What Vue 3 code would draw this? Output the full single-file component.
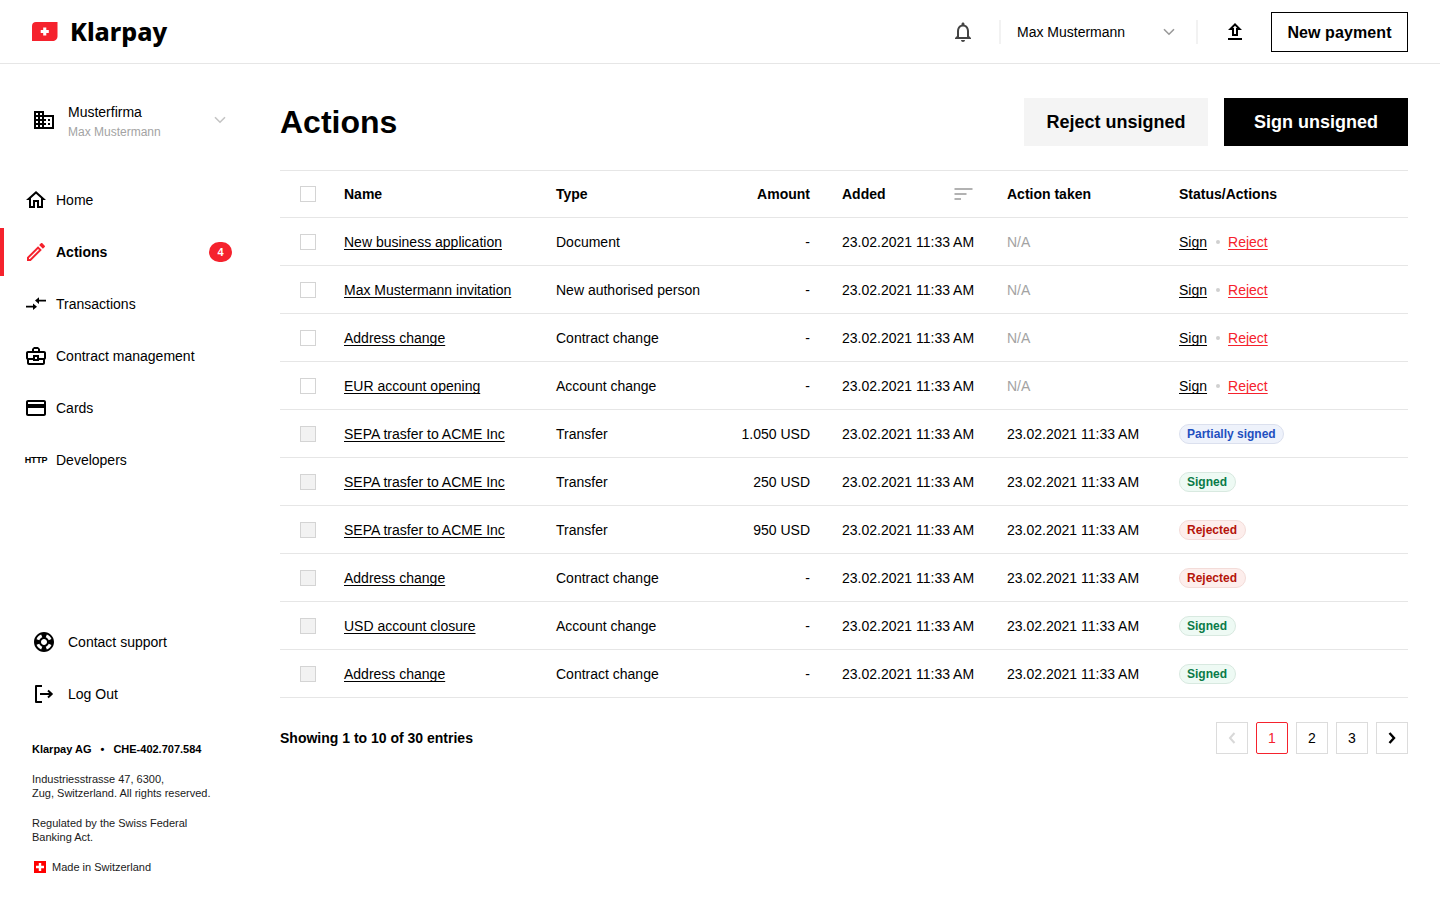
<template>
  <div class="page">
    <!-- Header -->
    <header class="topbar">
      <div class="brand">
        <svg class="brand-mark" width="26" height="20" viewBox="0 0 26 20">
          <path d="M4 0H25.5V14C25.5 17.3 23.3 19 20.5 19H0V4C0 1.6 1.6 0 4 0Z" fill="#f5222d" />
          <path d="M11.2 5.5H14.3V8H16.8V11H14.3V13.5H11.2V11H8.7V8H11.2Z" fill="#fff" />
        </svg>
        <span class="brand-name">Klarpay</span>
      </div>
      <div class="top-actions">
        <svg class="bell" width="24" height="24" viewBox="0 0 24 24">
          <path d="M12 22c1.1 0 2-.9 2-2h-4c0 1.1.9 2 2 2zm6-6v-5c0-3.07-1.63-5.64-4.5-6.32V4c0-.83-.67-1.5-1.5-1.5s-1.5.67-1.5 1.5v.68C7.64 5.36 6 7.92 6 11v5l-2 2v1h16v-1l-2-2zm-2 1H8v-6c0-2.48 1.51-4.5 4-4.5s4 2.02 4 4.5v6z" fill="#444" />
        </svg>
        <div class="user-menu">
          <span>Max Mustermann</span>
          <svg width="12" height="8" viewBox="0 0 12 8"><path d="M1 1.2L6 6.2L11 1.2" fill="none" stroke="#999" stroke-width="1.6" /></svg>
        </div>
        <svg class="upload" width="24" height="24" viewBox="0 0 24 24">
          <path d="M9 16h6v-6h4l-7-7-7 7h4zm3-10.17L14.17 8H13v6h-2V8H9.83L12 5.83zM5 18h14v2H5z" fill="#000" />
        </svg>
        <button class="btn-outline">New payment</button>
      </div>
    </header>

    <div class="layout">
      <!-- Sidebar -->
      <aside class="sidebar">
        <div>
          <div class="company">
            <svg width="24" height="24" viewBox="0 0 24 24">
              <path d="M12 7V3H2v18h20V7H12zM6 19H4v-2h2v2zm0-4H4v-2h2v2zm0-4H4V9h2v2zm0-4H4V5h2v2zm4 12H8v-2h2v2zm0-4H8v-2h2v2zm0-4H8V9h2v2zm0-4H8V5h2v2zm10 12h-8v-2h2v-2h-2v-2h2v-2h-2V9h8v10zm-2-8h-2v2h2v-2zm0 4h-2v2h2v-2z" fill="#000" />
            </svg>
            <div class="company-text">
              <div class="company-name">Musterfirma</div>
              <div class="company-user">Max Mustermann</div>
            </div>
            <svg class="company-caret" width="12" height="8" viewBox="0 0 12 8"><path d="M1 1.2L6 6.2L11 1.2" fill="none" stroke="#c4c4c4" stroke-width="1.6" /></svg>
          </div>

          <nav class="nav">
            <a class="nav-item">
              <svg width="24" height="24" viewBox="0 0 24 24"><path d="M12 5.69l5 4.5V18h-2v-6H9v6H7v-7.81l5-4.5M12 3L2 12h3v8h6v-6h2v6h6v-8h3L12 3z" fill="#000" /></svg>
              <span>Home</span>
            </a>
            <a class="nav-item active">
              <svg width="24" height="24" viewBox="0 0 24 24"><path d="M14.06 9.02l.92.92L5.92 19H5v-.92l9.06-9.06M17.66 3c-.25 0-.51.1-.7.29l-1.83 1.83 3.75 3.75 1.83-1.83c.39-.39.39-1.02 0-1.41l-2.34-2.34c-.2-.2-.45-.29-.71-.29zm-3.6 3.19L3 17.25V21h3.75L17.81 9.94l-3.75-3.75z" fill="#f5222d" /></svg>
              <span>Actions</span>
              <b class="nav-badge">4</b>
            </a>
            <a class="nav-item">
              <svg width="24" height="24" viewBox="0 0 24 24">
                <path d="M2 13.8H9V11.4L13 14.7L9 18V15.6H2Z" fill="#000" />
                <path d="M22 7.7H15V5.3L11 8.6L15 11.9V9.5H22Z" fill="#000" />
              </svg>
              <span>Transactions</span>
            </a>
            <a class="nav-item">
              <svg width="24" height="24" viewBox="0 0 24 24"><path d="M20 7h-4V5l-2-2h-4L8 5v2H4c-1.1 0-2 .9-2 2v5c0 .75.4 1.38 1 1.73V19c0 1.11.89 2 2 2h14c1.11 0 2-.89 2-2v-3.28c.59-.35 1-.99 1-1.72V9c0-1.1-.9-2-2-2zM10 5h4v2h-4V5zM4 9h16v5h-5v-3H9v3H4V9zm9 6h-2v-2h2v2zm6 4H5v-3h4v1h6v-1h4v3z" fill="#000" /></svg>
              <span>Contract management</span>
            </a>
            <a class="nav-item">
              <svg width="24" height="24" viewBox="0 0 24 24"><path d="M20 4H4c-1.11 0-1.99.89-1.99 2L2 18c0 1.11.89 2 2 2h16c1.11 0 2-.89 2-2V6c0-1.11-.89-2-2-2zm0 14H4v-6h16v6zm0-10H4V6h16v2z" fill="#000" /></svg>
              <span>Cards</span>
            </a>
            <a class="nav-item">
              <i class="http-icon">HTTP</i>
              <span>Developers</span>
            </a>
          </nav>
        </div>

        <div class="side-bottom">
          <a class="bottom-link">
            <svg width="24" height="24" viewBox="0 0 24 24"><path d="M12 2C6.48 2 2 6.48 2 12s4.48 10 10 10 10-4.48 10-10S17.52 2 12 2zm7.46 7.12l-2.78 1.15c-.51-1.36-1.58-2.44-2.95-2.94l1.15-2.78c2.1.8 3.77 2.47 4.58 4.57zM12 15c-1.66 0-3-1.34-3-3s1.34-3 3-3 3 1.34 3 3-1.34 3-3 3zM9.13 4.54l1.17 2.78c-1.38.5-2.47 1.59-2.98 2.97L4.54 9.13c.81-2.11 2.48-3.78 4.59-4.59zM4.54 14.87l2.78-1.15c.51 1.38 1.59 2.46 2.97 2.96l-1.17 2.78c-2.1-.81-3.77-2.48-4.58-4.59zm10.34 4.59l-1.15-2.78c1.37-.51 2.45-1.59 2.95-2.97l2.78 1.17c-.81 2.1-2.48 3.77-4.58 4.58z" fill="#000" /></svg>
            <span>Contact support</span>
          </a>
          <a class="bottom-link">
            <svg width="24" height="24" viewBox="0 0 24 24">
              <path d="M10 4H4V20H10" fill="none" stroke="#000" stroke-width="2" stroke-linejoin="round" />
              <path d="M8 12H19.5M16 8.5L19.7 12L16 15.5" fill="none" stroke="#000" stroke-width="2" />
            </svg>
            <span>Log Out</span>
          </a>
          <div class="legal">
            <p class="legal-head"><b>Klarpay AG</b><b class="legal-dot">•</b><b>CHE-402.707.584</b></p>
            <p>Industriesstrasse 47, 6300,<br />Zug, Switzerland. All rights reserved.</p>
            <p>Regulated by the Swiss Federal<br />Banking Act.</p>
            <p class="made-in">
              <svg width="12" height="12" viewBox="0 0 12 12">
                <rect width="12" height="12" fill="#f00" />
                <path d="M4.8 2H7.2V4.8H10V7.2H7.2V10H4.8V7.2H2V4.8H4.8Z" fill="#fff" />
              </svg>
              Made in Switzerland
            </p>
          </div>
        </div>
      </aside>

      <!-- Main -->
      <main class="main">
        <div class="title-row">
          <h1>Actions</h1>
          <div class="title-buttons">
            <button class="btn-big btn-light">Reject unsigned</button>
            <button class="btn-big btn-dark">Sign unsigned</button>
          </div>
        </div>

        <div class="table">
          <div class="row head">
            <div><span class="check"></span></div>
            <div>Name</div>
            <div>Type</div>
            <div class="right">Amount</div>
            <div class="added-head">
              <span>Added</span>
              <svg width="19" height="14" viewBox="0 0 19 14">
                <path d="M0.5 2H18.5M0.5 7H12.5M0.5 12H7" stroke="#999" stroke-width="1.6" fill="none" />
              </svg>
            </div>
            <div>Action taken</div>
            <div>Status/Actions</div>
          </div>

          <div v-for="(item, i) in rows" :key="i" class="row">
            <div><span class="check" :class="{ disabled: item.status }"></span></div>
            <div><a class="link">{{ item.name }}</a></div>
            <div>{{ item.type }}</div>
            <div class="right">{{ item.amount }}</div>
            <div>23.02.2021 11:33 AM</div>
            <div v-if="item.status">23.02.2021 11:33 AM</div>
            <div v-else class="muted">N/A</div>
            <div v-if="item.status">
              <span class="pill" :class="item.status">{{ statusLabels[item.status] }}</span>
            </div>
            <div v-else class="row-actions">
              <a class="link">Sign</a>
              <i class="sep"></i>
              <a class="link reject">Reject</a>
            </div>
          </div>
        </div>

        <div class="table-footer">
          <b>Showing 1 to 10 of 30 entries</b>
          <div class="pager">
            <button class="page-btn">
              <svg width="10" height="14" viewBox="0 0 10 14"><path d="M7.5 2L3 7L7.5 12" fill="none" stroke="#d8d8d8" stroke-width="2" /></svg>
            </button>
            <button class="page-btn current">1</button>
            <button class="page-btn">2</button>
            <button class="page-btn">3</button>
            <button class="page-btn">
              <svg width="10" height="14" viewBox="0 0 10 14"><path d="M2.5 2L7 7L2.5 12" fill="none" stroke="#000" stroke-width="2.4" /></svg>
            </button>
          </div>
        </div>
      </main>
    </div>
  </div>
</template>

<script setup>
const statusLabels = {
  partial: 'Partially signed',
  signed: 'Signed',
  rejected: 'Rejected'
}

const rows = [
  { name: 'New business application', type: 'Document', amount: '-' },
  { name: 'Max Mustermann invitation', type: 'New authorised person', amount: '-' },
  { name: 'Address change', type: 'Contract change', amount: '-' },
  { name: 'EUR account opening', type: 'Account change', amount: '-' },
  { name: 'SEPA trasfer to ACME Inc', type: 'Transfer', amount: '1.050 USD', status: 'partial' },
  { name: 'SEPA trasfer to ACME Inc', type: 'Transfer', amount: '250 USD', status: 'signed' },
  { name: 'SEPA trasfer to ACME Inc', type: 'Transfer', amount: '950 USD', status: 'rejected' },
  { name: 'Address change', type: 'Contract change', amount: '-', status: 'rejected' },
  { name: 'USD account closure', type: 'Account change', amount: '-', status: 'signed' },
  { name: 'Address change', type: 'Contract change', amount: '-', status: 'signed' }
]
</script>

<style>
html,
body {
  margin: 0;
  background: #fff;
}
</style>

<style scoped>
.page {
  min-height: 900px;
  display: flex;
  flex-direction: column;
  font-family: "Liberation Sans", Arial, sans-serif;
  font-size: 14px;
  color: #000;
}

.topbar {
  height: 64px;
  box-sizing: border-box;
  border-bottom: 1px solid #e6e6e6;
  display: flex;
  align-items: center;
  justify-content: space-between;
  padding: 0 32px;
}

.brand {
  display: flex;
  align-items: center;
  gap: 12px;
}

.brand-mark {
  margin-top: 1px;
}

.brand-name {
  font-family: "Noto Sans", sans-serif;
  font-size: 25px;
  font-weight: 800;
  line-height: 32px;
  margin-bottom: 2px;
}

.top-actions {
  display: flex;
  align-items: center;
}

.bell {
  margin-right: 24px;
}

.user-menu {
  width: 199px;
  box-sizing: border-box;
  height: 24px;
  border-left: 2px solid #f2f2f2;
  border-right: 2px solid #f2f2f2;
  padding: 0 21px 0 16px;
  display: flex;
  align-items: center;
  justify-content: space-between;
}

.upload {
  margin: 0 24px 0 25px;
}

.btn-outline {
  width: 137px;
  height: 40px;
  border: 1px solid #000;
  background: #fff;
  font: 700 16px "Liberation Sans", Arial, sans-serif;
  letter-spacing: 0.1px;
  padding: 2px 0 0;
}

.layout {
  flex: 1;
  display: flex;
}

.sidebar {
  width: 280px;
  flex-shrink: 0;
  box-sizing: border-box;
  display: flex;
  flex-direction: column;
  justify-content: space-between;
}

.company {
  display: flex;
  align-items: center;
  padding: 34px 0 0 32px;
  width: 226px;
  height: 78px;
  box-sizing: border-box;
}

.company-text {
  margin-left: 12px;
  flex: 1;
}

.company-name {
  line-height: 24px;
}

.company-user {
  font-size: 12px;
  line-height: 16px;
  color: #a3a3a3;
}

.nav {
  margin-top: 34px;
}

.nav-item {
  position: relative;
  height: 48px;
  margin-bottom: 4px;
  width: 256px;
  box-sizing: border-box;
  display: flex;
  align-items: center;
  gap: 8px;
  padding: 0 24px;
}

.nav-item.active {
  font-weight: 700;
  border-left: 4px solid #f5222d;
  padding-left: 20px;
}

.nav-badge {
  margin-left: auto;
  width: 23px;
  height: 20px;
  border-radius: 10px;
  background: #f5222d;
  color: #fff;
  font-size: 11px;
  line-height: 20px;
  text-align: center;
}

.http-icon {
  width: 24px;
  font: 700 9px/1 "Liberation Sans", Arial, sans-serif;
  letter-spacing: -0.3px;
  text-align: center;
  white-space: nowrap;
}

.side-bottom {
  padding: 0 0 26px 32px;
}

.bottom-link {
  display: flex;
  align-items: center;
  gap: 12px;
  height: 48px;
  margin-bottom: 4px;
}

.legal {
  margin-top: 24px;
  font-size: 11px;
  line-height: 14px;
  color: #1a1a1a;
}

.legal p {
  margin: 0 0 16px;
}

.legal-head {
  color: #000;
}

.legal-dot {
  margin: 0 9px;
}

.legal .made-in {
  display: flex;
  align-items: center;
  gap: 6px;
  margin: 0;
}

.made-in svg {
  margin-left: 2px;
}

.main {
  flex: 1;
  min-width: 0;
  padding: 34px 32px 0 0;
}

.title-row {
  display: flex;
  align-items: center;
  justify-content: space-between;
  margin-bottom: 24px;
}

h1 {
  margin: 0;
  font-size: 32px;
  line-height: 48px;
  font-weight: 700;
}

.title-buttons {
  display: flex;
  gap: 16px;
}

.btn-big {
  width: 184px;
  height: 48px;
  border: 0;
  padding: 0;
  font: 700 18px "Liberation Sans", Arial, sans-serif;
}

.btn-light {
  background: #f4f4f4;
  color: #000;
}

.btn-dark {
  background: #000;
  color: #fff;
}

.table {
  border-top: 1px solid #e6e6e6;
}

.row {
  display: grid;
  grid-template-columns: 64px 212px 150px 104px 197px 172px 1fr;
  align-items: center;
  height: 48px;
  box-sizing: border-box;
  border-bottom: 1px solid #e6e6e6;
  padding-left: 0;
}

.row > div:first-child {
  padding-left: 20px;
  display: flex;
}

.row > div:nth-child(5) {
  padding-left: 32px;
}

.row.head {
  height: 47px;
  font-weight: 700;
}

.right {
  text-align: right;
}

.added-head {
  display: flex;
  align-items: center;
  justify-content: space-between;
  padding-right: 34px;
}

.check {
  width: 16px;
  height: 16px;
  box-sizing: border-box;
  border: 1px solid #d4d4d4;
  background: #fff;
}

.check.disabled {
  background: #f2f2f2;
}

.link {
  color: #000;
  text-decoration: underline;
  text-decoration-skip-ink: none;
  text-underline-offset: 2px;
}

.reject {
  color: #f5222d;
}

.muted {
  color: #a3a3a3;
}

.row-actions {
  display: flex;
  align-items: center;
}

.sep {
  width: 4px;
  height: 4px;
  border-radius: 50%;
  background: #d0d0d0;
  margin: 0 8px 0 9px;
}

.pill {
  display: inline-block;
  height: 20px;
  box-sizing: border-box;
  padding: 0 7px;
  border: 1px solid;
  border-radius: 10px;
  font-size: 12px;
  font-weight: 700;
  line-height: 18px;
}

.pill.partial {
  color: #1f4fbf;
  background: #eef2fb;
  border-color: #dbe0ee;
}

.pill.signed {
  padding-right: 8px;
  color: #0a7a48;
  background: #eefaf4;
  border-color: #d8e9e0;
}

.pill.rejected {
  padding-right: 8px;
  color: #b5140a;
  background: #fdeeec;
  border-color: #f3dcd9;
}

.table-footer {
  display: flex;
  align-items: center;
  justify-content: space-between;
  margin-top: 24px;
}

.pager {
  display: flex;
  gap: 8px;
}

.page-btn {
  width: 32px;
  height: 32px;
  padding: 0;
  display: flex;
  align-items: center;
  justify-content: center;
  background: #fff;
  border: 1px solid #dcdcdc;
  font: 14px "Liberation Sans", Arial, sans-serif;
  color: #000;
}

.page-btn.current {
  border-color: #f5222d;
  border-radius: 2px;
  color: #f5222d;
}
</style>
